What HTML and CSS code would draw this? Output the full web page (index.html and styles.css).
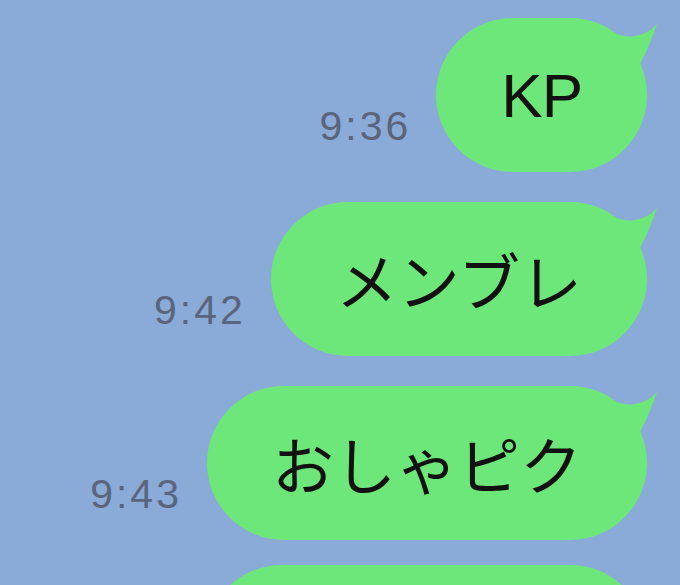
FILE: index.html
```html
<!DOCTYPE html>
<html lang="ja">
<head>
  <meta charset="UTF-8" />
  <meta name="viewport" content="width=device-width, initial-scale=1.0"/>
  <title>トーク</title>
  <link rel="stylesheet" href="styles.css">
</head>
<body>
  <div class="chat">
    <div class="row">
      <span class="time">9:36</span>
      <div class="bubble bubble-short">
        KP
        <svg class="tail" viewBox="0 0 42 50" width="42" height="50"><path d="M0,16 C12,21 28,19 40,6 C35,20 30,33 23,46 L0,46 Z"/></svg>
      </div>
    </div>

    <div class="row">
      <span class="time">9:42</span>
      <div class="bubble">
        メンブレ
        <svg class="tail" viewBox="0 0 42 50" width="42" height="50"><path d="M0,16 C12,21 28,19 40,6 C35,20 30,33 23,46 L0,46 Z"/></svg>
      </div>
    </div>

    <div class="row">
      <span class="time">9:43</span>
      <div class="bubble">
        おしゃピク
        <svg class="tail" viewBox="0 0 42 50" width="42" height="50"><path d="M0,16 C12,21 28,19 40,6 C35,20 30,33 23,46 L0,46 Z"/></svg>
      </div>
    </div>

    <div class="row row-last">
      <div class="bubble bubble-blank"></div>
    </div>
  </div>
</body>
</html>
```

FILE: styles.css
```css
body {
  margin: 0;
  background-color: #8aaad8;
  font-family: 'Liberation Sans', 'Noto Sans CJK JP', sans-serif;
}
.chat {
  display: flex;
  flex-direction: column;
  gap: 30px;
  height: 585px;
  box-sizing: border-box;
  padding: 18px 33px 0 0;
  overflow: hidden;
}
.row {
  display: flex;
  flex-shrink: 0;
  justify-content: flex-end;
  align-items: flex-end;
  gap: 25px;
}
.row-last {
  margin-top: -5px;
}
.time {
  font-size: 41px;
  line-height: 1;
  letter-spacing: 3px;
  color: #5a657b;
  margin-bottom: 25px;
}
.bubble {
  position: relative;
  display: flex;
  align-items: center;
  box-sizing: border-box;
  height: 154px;
  padding: 0 65px;
  border-radius: 77px;
  background-color: #6ee77a;
  color: #111;
  font-size: 62px;
  white-space: nowrap;
}
.bubble-short {
  letter-spacing: -1px;
}
.bubble-blank {
  width: 442px;
}
.tail {
  position: absolute;
  top: 0;
  right: -12px;
  fill: #6ee77a;
}
```
